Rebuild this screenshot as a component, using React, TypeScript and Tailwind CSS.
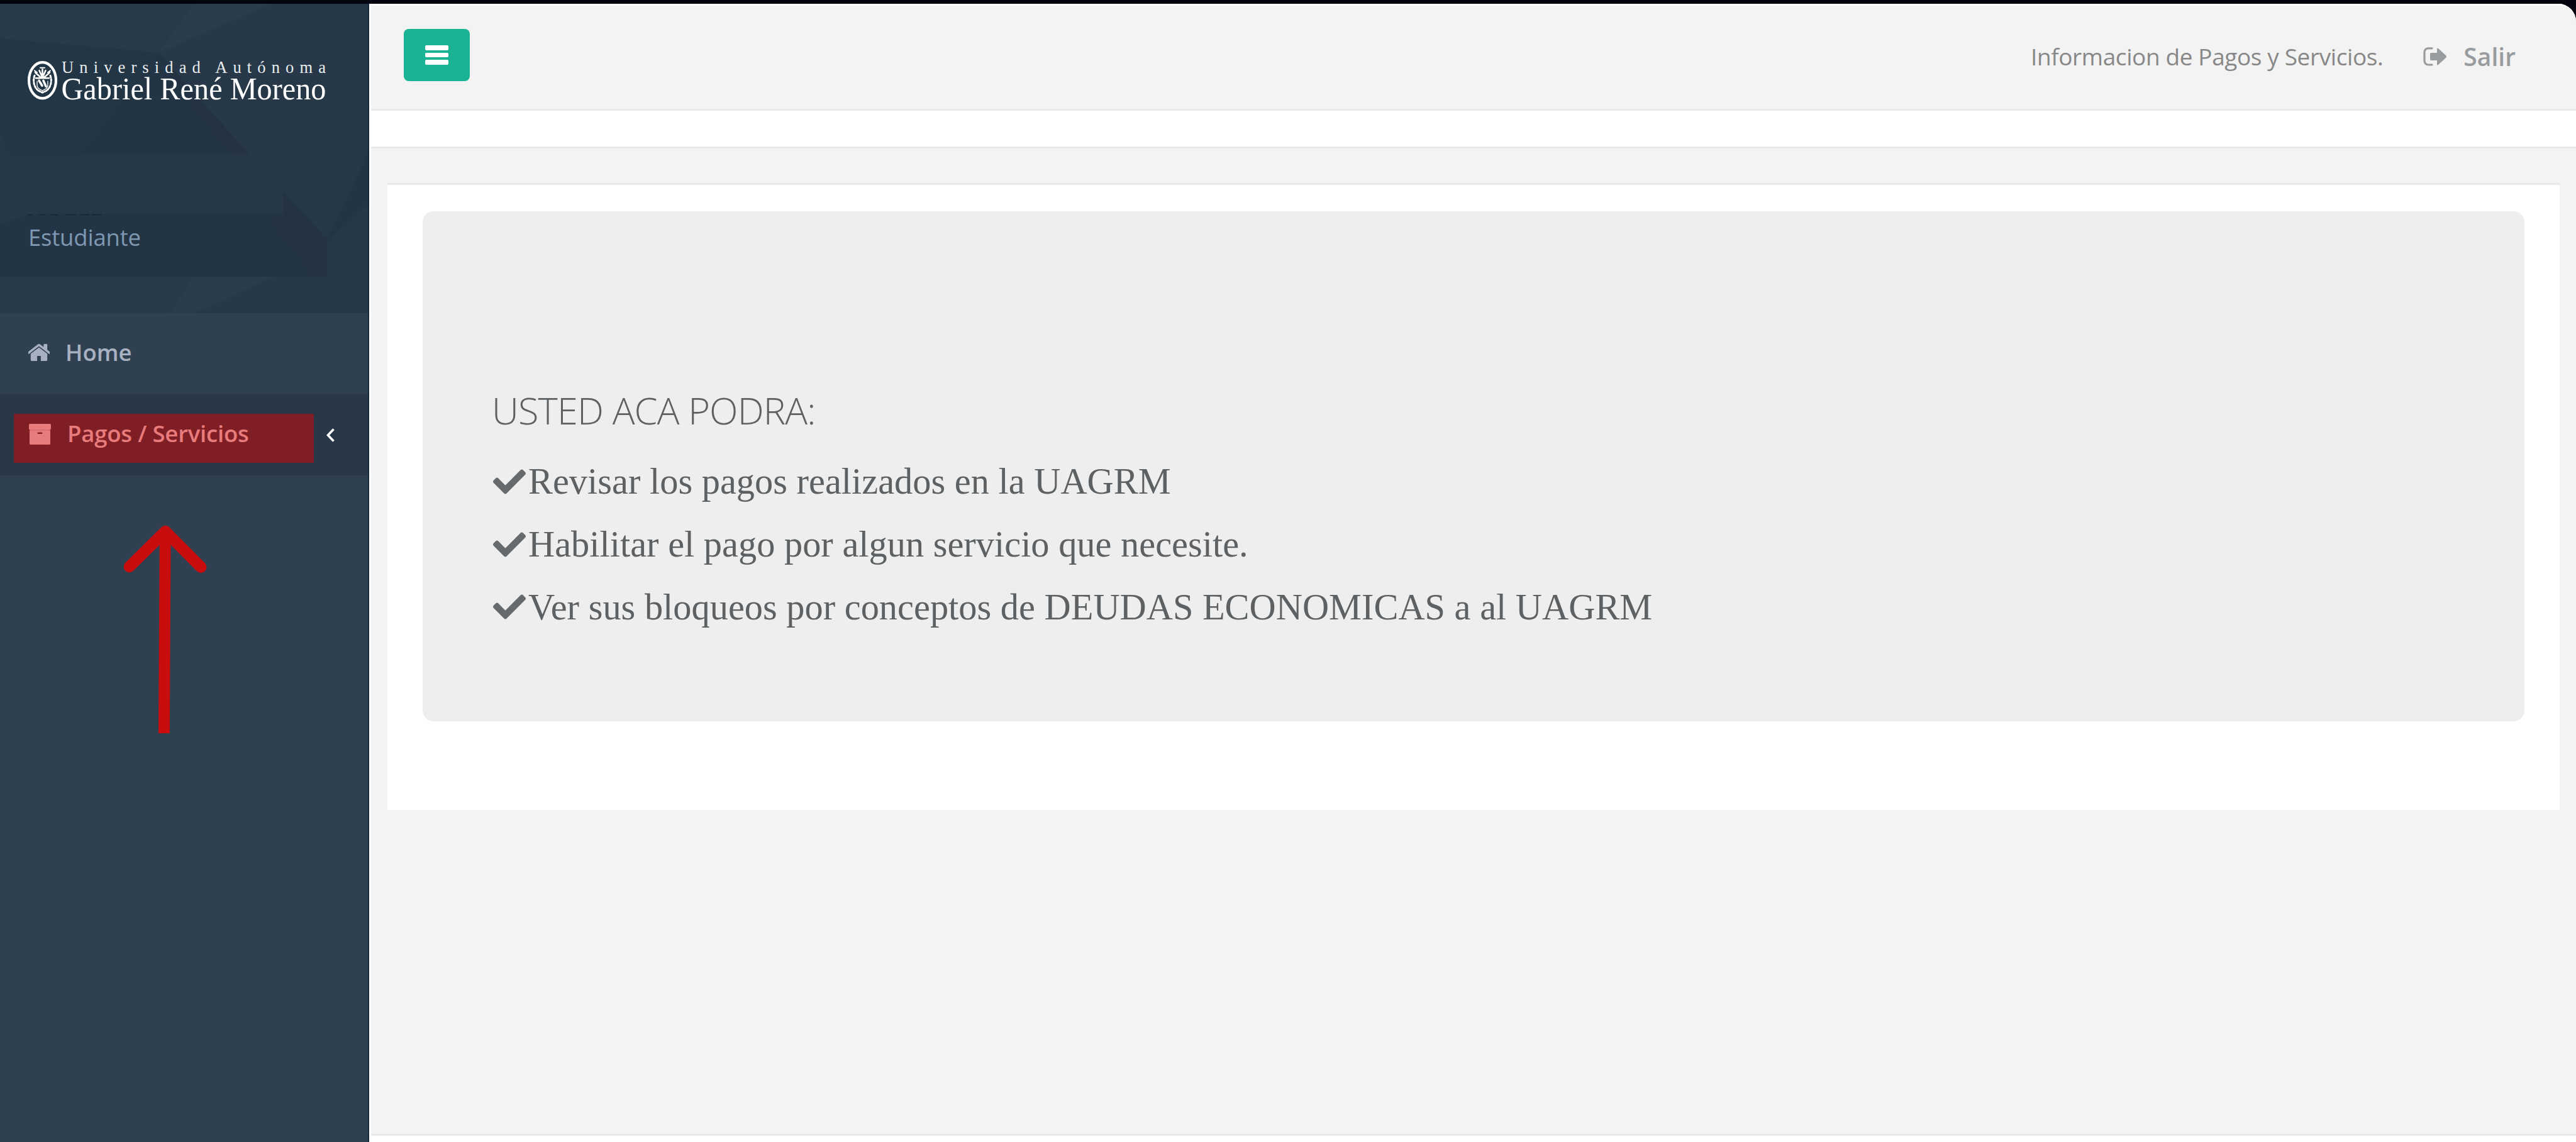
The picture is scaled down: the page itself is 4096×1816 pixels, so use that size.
import { FaCheck } from "react-icons/fa";

const items = [
  "Revisar los pagos realizados en la UAGRM",
  "Habilitar el pago por algun servicio que necesite.",
  "Ver sus bloqueos por conceptos de DEUDAS ECONOMICAS a al UAGRM",
];

function HeaderPattern() {
  return (
    <svg className="absolute inset-0 h-full w-full" viewBox="0 20 1475 1525" preserveAspectRatio="none" aria-hidden="true">
      <rect x="0" y="20" width="1475" height="1525" fill="#253847" />
      <polygon points="0,20 775,20 635,262 0,192" fill="#273a49" />
      <polygon points="775,20 1090,20 635,262" fill="#2a3d4c" />
      <polygon points="1090,20 1475,20 1420,340 1410,760 1000,762 635,262" fill="#273948" />
      <polygon points="0,192 635,262 480,500 320,762 50,820 0,640" fill="#233645" />
      <polygon points="635,262 1000,762 920,762 740,480" fill="#233343" />
      <polygon points="635,262 740,480 920,762 320,762 480,500" fill="#233545" />
      <polygon points="1475,760 1310,1190 1475,1010" fill="#233545" />
      <rect x="20" y="762" width="1117" height="296" fill="#263848" />
      <polygon points="0,1110 120,1058 1137,1058 1137,950 1310,1180 1310,1365 0,1365" fill="#233545" />
      <polygon points="1085,1058 1137,1058 1137,950 1310,1180 1310,1365 1240,1365 1200,1270 1110,1150" fill="#233343" />
      <polygon points="1310,1185 1475,1310 1475,1365 1310,1365" fill="#253847" />
      <polygon points="0,1365 775,1365 680,1545 0,1545" fill="#273a49" />
      <polygon points="775,1365 1100,1365 780,1545 680,1545" fill="#2a3d4c" />
      <polygon points="1100,1365 1475,1365 1475,1545 780,1545" fill="#273948" />
      <path d="M110 1060h20M158 1060h26M204 1060h30M262 1060h42M318 1060h40M368 1060h40" stroke="#142434" strokeWidth="5" />
    </svg>
  );
}

function Logo() {
  return (
    <svg className="relative block h-[70px] w-[480px] overflow-visible" viewBox="0 0 480 70" aria-label="Universidad Autónoma Gabriel René Moreno">
      <ellipse cx="23.5" cy="31.700" rx="21.5" ry="28.6" fill="none" stroke="#fff" strokeWidth="4.2" />
      <g fill="none" stroke="#fff" strokeLinecap="round" transform="translate(0 -2.8)">
        <path d="M23.5 30V17M23.5 30l-5-11M23.5 30l5-11M22 31l-10-9M25 31l10-9M13 31h21" strokeWidth="2.6" />
        <path d="M11 19l4 3M36 19l-4 3M20 14.500h7" strokeWidth="2" />
        <path d="M11 27c-3 8-1 18 5 23M36 27c3 8 1 18-5 23M17 51l6.500 3 6.500-3" strokeWidth="3" strokeDasharray="3 2.600" />
        <path d="M18 35l5 8M25 35l4 9" strokeWidth="3.500" />
        <path d="M15 36v6c0 5 4 7 8.500 9 4.500-2 8.500-4 8.500-9v-6" strokeWidth="1.300" />
      </g>
      <text x="54" y="20" fill="#e9edf0" fontFamily="'Liberation Serif', serif" fontSize="26.500" textLength="420" lengthAdjust="spacing">
        Universidad Autónoma
      </text>
      <text x="53.500" y="61.700" fill="#fff" fontFamily="'Liberation Serif', serif" fontSize="51" textLength="421" lengthAdjust="spacingAndGlyphs">
        Gabriel René Moreno
      </text>
    </svg>
  );
}

function HomeIcon() {
  return (
    <svg className="h-[27px] w-[34px]" viewBox="89 253 1487 1283" preserveAspectRatio="none" fill="currentColor" aria-hidden="true">
      <path d="M1408 992v480q0 26-19 45t-45 19H960v-384H704v384H320q-26 0-45-19t-19-45V992q0-1 .5-3t.5-3l575-474 575 474q1 2 1 6zm223-69l-62 74q-8 9-21 11h-3q-13 0-21-7L832 424l-692 577q-12 8-24 7-13-2-21-11l-62-74q-8-10-7-23.500t11-21.500l719-599q32-26 76-26t76 26l244 204V288q0-14 9-23t23-9h192q14 0 23 9t9 23v408l219 182q10 8 11 21.500t-7 23.500z" />
    </svg>
  );
}

function ArchiveIcon() {
  return (
    <svg className="h-[33px] w-[35px]" viewBox="0 0 35 33" aria-hidden="true">
      <rect x="0" y="0" width="35" height="9" rx="1.500" fill="#e87b7c" />
      <rect x="1" y="10" width="33" height="23" rx="1.500" fill="#e87b7c" />
      <rect x="1" y="9" width="33" height="1.500" fill="#d96a6c" />
      <rect x="13.500" y="13.500" width="8" height="2.500" rx="1.200" fill="#801e25" />
    </svg>
  );
}

function SignOutIcon() {
  return (
    <svg className="h-[30px] w-[38px]" viewBox="0 0 38 30" aria-hidden="true">
      <path d="M14 1.800H8A6 6 0 0 0 2 8v14a6 6 0 0 0 6 6h6" fill="none" stroke="#999c9e" strokeWidth="3.200" strokeLinecap="round" />
      <path d="M11 10.500q0-1.500 1.500-1.500H22V3q0-2.600 2-.9l12.500 11.500q1.300 1.400 0 2.800L24 27.900q-2 1.700-2-.9v-6h-9.500Q11 21 11 19.500Z" fill="#999c9e" />
    </svg>
  );
}

function PointerArrow() {
  return (
    <svg className="mt-[76px] ml-[193px] block h-[337px] w-[139px]" viewBox="180 120 560 1360" aria-hidden="true">
      <path d="M461 172L453.500 1468" stroke="#c80d0e" strokeWidth="72" />
      <path d="M231 399L462 172L690 402" fill="none" stroke="#c80d0e" strokeWidth="73" strokeLinecap="round" strokeLinejoin="round" />
    </svg>
  );
}

function Sidebar() {
  return (
    <aside className="flex w-[587px] shrink-0 flex-col border-r-2 border-[#162a3e] bg-[#2f4050]">
      <div className="relative h-[492px] shrink-0 pt-[90px] pl-[44px]">
        <HeaderPattern />
        <Logo />
        <div className="relative mt-[186px] ml-px text-[36.5px] leading-[50px] tracking-[-0.2px] text-[#7f98b2]">Estudiante</div>
      </div>
      <nav className="shrink-0 font-semibold">
        <a className="flex h-[129px] items-center pb-[5px] pl-[45px] text-[#a7b1c2]">
          <HomeIcon />
          <span className="ml-[25px] text-[36.5px] leading-[50px]">Home</span>
        </a>
        <a className="flex h-[129px] items-center bg-[#293846] pl-[22px]">
          <span className="mt-[10px] flex h-[78px] w-[477px] items-start bg-[#801e25] pt-[6px] pl-[24px] text-[#e87b7c]">
            <span className="mt-[10px]">
              <ArchiveIcon />
            </span>
            <span className="ml-[26px] text-[36.5px] leading-[50px] tracking-[-0.2px]">Pagos / Servicios</span>
          </span>
          <svg className="ml-[20px] h-[22px] w-[13px]" viewBox="0 0 13 22" aria-hidden="true">
            <path d="M11.500 1.500L2.500 11l9 9.500" fill="none" stroke="#fff" strokeWidth="3.600" />
          </svg>
        </a>
      </nav>
      <PointerArrow />
    </aside>
  );
}

function TopBar() {
  return (
    <header className="flex h-[170px] shrink-0 items-start justify-between border-t-3 border-b-3 border-t-white border-b-[#e7eaec] bg-[#f3f3f3] pr-[96px] pl-[52px]">
      <button className="mt-[37px] flex h-[83px] w-[105px] flex-col items-center justify-center gap-[4px] rounded-[8px] bg-[#1ab394]">
        <span className="h-[7.500px] w-[37px] rounded-[2px] bg-white" />
        <span className="h-[7.500px] w-[37px] rounded-[2px] bg-white" />
        <span className="h-[7.500px] w-[37px] rounded-[2px] bg-white" />
      </button>
      <div className="mt-[56px] flex h-[50px] items-center whitespace-nowrap">
        <span className="text-[37px] leading-[50px] tracking-[-0.4px] text-[#888888]">Informacion de Pagos y Servicios.</span>
        <span className="ml-[64px]">
          <SignOutIcon />
        </span>
        <span className="ml-[26px] text-[39px] leading-[50px] font-semibold text-[#999c9e]">Salir</span>
      </div>
    </header>
  );
}

export default function App() {
  return (
    <div className="flex h-[1816px] w-[4096px] flex-col overflow-hidden bg-[#03030f] pt-[6px] font-['Open_Sans',sans-serif]">
      <div className="flex min-h-0 flex-1 overflow-hidden rounded-tr-[28px]">
        <Sidebar />
        <main className="flex min-w-0 flex-1 flex-col border-l-3 border-white bg-[#f3f3f3]">
          <TopBar />
          <div className="h-[60px] shrink-0 border-b-3 border-[#e7eaec] bg-white" />
          <section className="mt-[55px] mr-[26px] ml-[26px] h-[997px] shrink-0 border-t-3 border-[#e7eaec] bg-white pt-[42px] pr-[56px] pl-[56px]">
            <div className="h-[811px] rounded-[17px] bg-[#eeeeee] pt-[276px] pl-[112px] text-[#5d6163]">
              <h3 className="-ml-[2px] h-[80px] text-[59.5px] leading-[80px] font-light tracking-[-0.85px] whitespace-nowrap">USTED ACA PODRA:</h3>
              <ul className="mt-[24px] font-['Liberation_Serif',serif] text-[58.4px]">
                {items.map((t) => (
                  <li key={t} className="flex h-[99.800px] items-center whitespace-nowrap">
                    <FaCheck className="h-[52px] w-[52px] shrink-0 text-[#676a6c]" />
                    <span className="ml-[4px] leading-[99px]">{t}</span>
                  </li>
                ))}
              </ul>
            </div>
          </section>
          <div className="flex-1" />
          <footer className="h-[13px] shrink-0 border-t-3 border-[#e7eaec] bg-white" />
        </main>
      </div>
    </div>
  );
}
